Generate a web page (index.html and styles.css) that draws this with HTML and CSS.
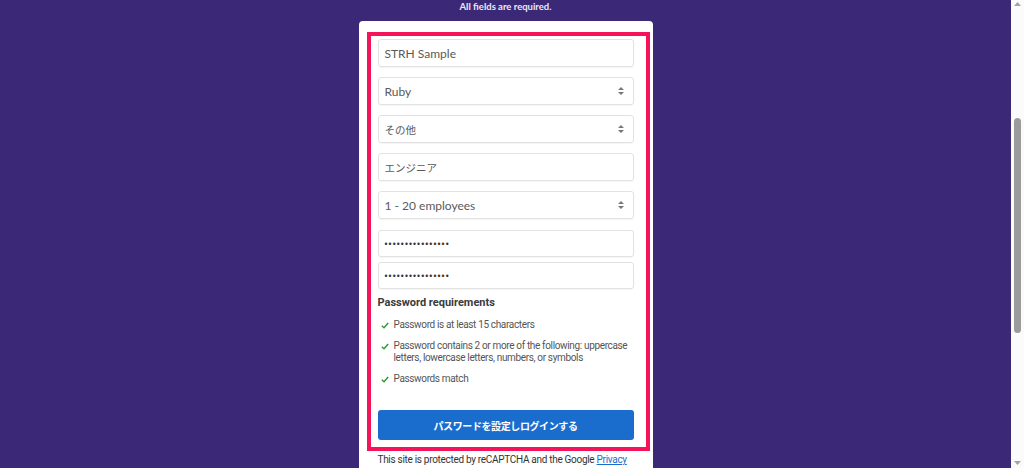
FILE: index.html
```html
<!DOCTYPE html>
<html lang="ja">
<head>
  <meta charset="UTF-8"/>
  <meta name="viewport" content="width=device-width, initial-scale=1.0"/>
  <title>パスワードの設定</title>
  <link rel="stylesheet" href="styles.css">
</head>
<body>

<div class="page">
  <p class="note">All fields are required.</p>

  <div class="card">
    <form class="focus-box">
      <div class="field">STRH Sample</div>
      <div class="field select"><span>Ruby</span>
        <svg class="arrows" width="6" height="8" viewBox="0 0 6 8"><path d="M3 0L6 3H0Z M3 8L0 5H6Z" fill="#777"/></svg>
      </div>
      <div class="field select"><span class="ja">その他</span>
        <svg class="arrows" width="6" height="8" viewBox="0 0 6 8"><path d="M3 0L6 3H0Z M3 8L0 5H6Z" fill="#777"/></svg>
      </div>
      <div class="field"><span class="ja">エンジニア</span></div>
      <div class="field select last"><span>1 - 20 employees</span>
        <svg class="arrows" width="6" height="8" viewBox="0 0 6 8"><path d="M3 0L6 3H0Z M3 8L0 5H6Z" fill="#777"/></svg>
      </div>
      <div class="field pw">••••••••••••••••</div>
      <div class="field pw">••••••••••••••••</div>

      <h3>Password requirements</h3>
      <ul class="reqs">
        <li><svg class="check" width="8" height="7" viewBox="0 0 8 7"><path d="M0.8 3.8L3 5.8L7.2 0.9" fill="none" stroke="#2f9a3c" stroke-width="1.5"/></svg>
          <span>Password is at least 15 characters</span></li>
        <li><svg class="check" width="8" height="7" viewBox="0 0 8 7"><path d="M0.8 3.8L3 5.8L7.2 0.9" fill="none" stroke="#2f9a3c" stroke-width="1.5"/></svg>
          <span>Password contains 2 or more of the following: uppercase letters, lowercase letters, numbers, or symbols</span></li>
        <li><svg class="check" width="8" height="7" viewBox="0 0 8 7"><path d="M0.8 3.8L3 5.8L7.2 0.9" fill="none" stroke="#2f9a3c" stroke-width="1.5"/></svg>
          <span>Passwords match</span></li>
      </ul>

      <button type="button" class="btn">パスワードを設定しログインする</button>
    </form>

    <p class="legal">This site is protected by reCAPTCHA and the Google <a href="#">Privacy</a></p>
  </div>
</div>

<div class="scrollbar">
  <svg class="sb-arrow" width="7" height="4" viewBox="0 0 7 4"><path d="M3.5 0L7 4H0Z" fill="#a3a3a3"/></svg>
  <div class="track"><div class="thumb"></div></div>
  <svg class="sb-arrow" width="7" height="4" viewBox="0 0 7 4"><path d="M0 0H7L3.5 4Z" fill="#a3a3a3"/></svg>
</div>

</body>
</html>
```

FILE: styles.css
```css
*,*::before,*::after{box-sizing:border-box;margin:0;padding:0;}
html,body{height:100%;}
body{display:flex;overflow:hidden;background:#3b2876;font-family:Lato,"Noto Sans CJK JP",sans-serif;color:#333;}

.page{flex:1;display:flex;flex-direction:column;align-items:center;}
.note{line-height:14px;font-size:9.5px;font-weight:700;color:#ebe8f4;}

.card{width:294px;margin-top:7px;background:#fff;border-radius:4px 4px 0 0;padding:11px 3px 40px 8px;}
.focus-box{border:4px solid #f5135a;padding:3px 12px 7px 7px;display:flex;flex-direction:column;}

.field{height:28px;margin-bottom:10px;border:1px solid #e2e2e2;border-radius:3px;box-shadow:0 1px 1px rgba(0,0,0,.04);
  padding:0 9px 0 6px;display:flex;align-items:center;justify-content:space-between;font-size:12px;color:#5a5a5a;}
.field .ja{font-family:"Noto Sans CJK JP",sans-serif;font-size:10.5px;}
.field.last{margin-bottom:11px;}
.field.pw{height:27px;margin-bottom:5px;font-family:"Liberation Sans",sans-serif;font-size:8.5px;letter-spacing:1.1px;color:#333;}
.arrows{flex:none;}

h3{margin-top:2px;line-height:13px;font-family:Roboto,sans-serif;font-size:11px;font-weight:700;color:#3a3a3a;}
.reqs{list-style:none;margin-top:10px;padding-left:3px;font-family:Roboto,sans-serif;font-size:10px;letter-spacing:-.35px;line-height:12px;color:#555;}
.reqs li{display:flex;gap:5px;margin-bottom:9px;}
.reqs li:last-child{margin-bottom:0;}
.check{flex:none;margin-top:3px;}

.btn{margin-top:25px;height:30px;border:none;border-radius:3px;background:#1b6dcd;color:#fff;
  font-family:"Noto Sans CJK JP",sans-serif;font-size:10px;font-weight:700;letter-spacing:-.4px;cursor:pointer;}

.legal{margin-top:2px;padding-left:11px;font-family:Roboto,sans-serif;font-size:10px;letter-spacing:-.3px;line-height:14px;color:#333;}
.legal a{color:#1b6dcd;text-decoration:underline;}

.scrollbar{width:13px;flex:none;background:#fbfbfb;display:flex;flex-direction:column;align-items:center;padding:2px 0 3px;}
.sb-arrow{flex:none;}
.track{flex:1;width:100%;padding-left:3px;}
.thumb{width:7px;height:215px;margin-top:112px;border-radius:4px;background:#9b9b9b;}
```
